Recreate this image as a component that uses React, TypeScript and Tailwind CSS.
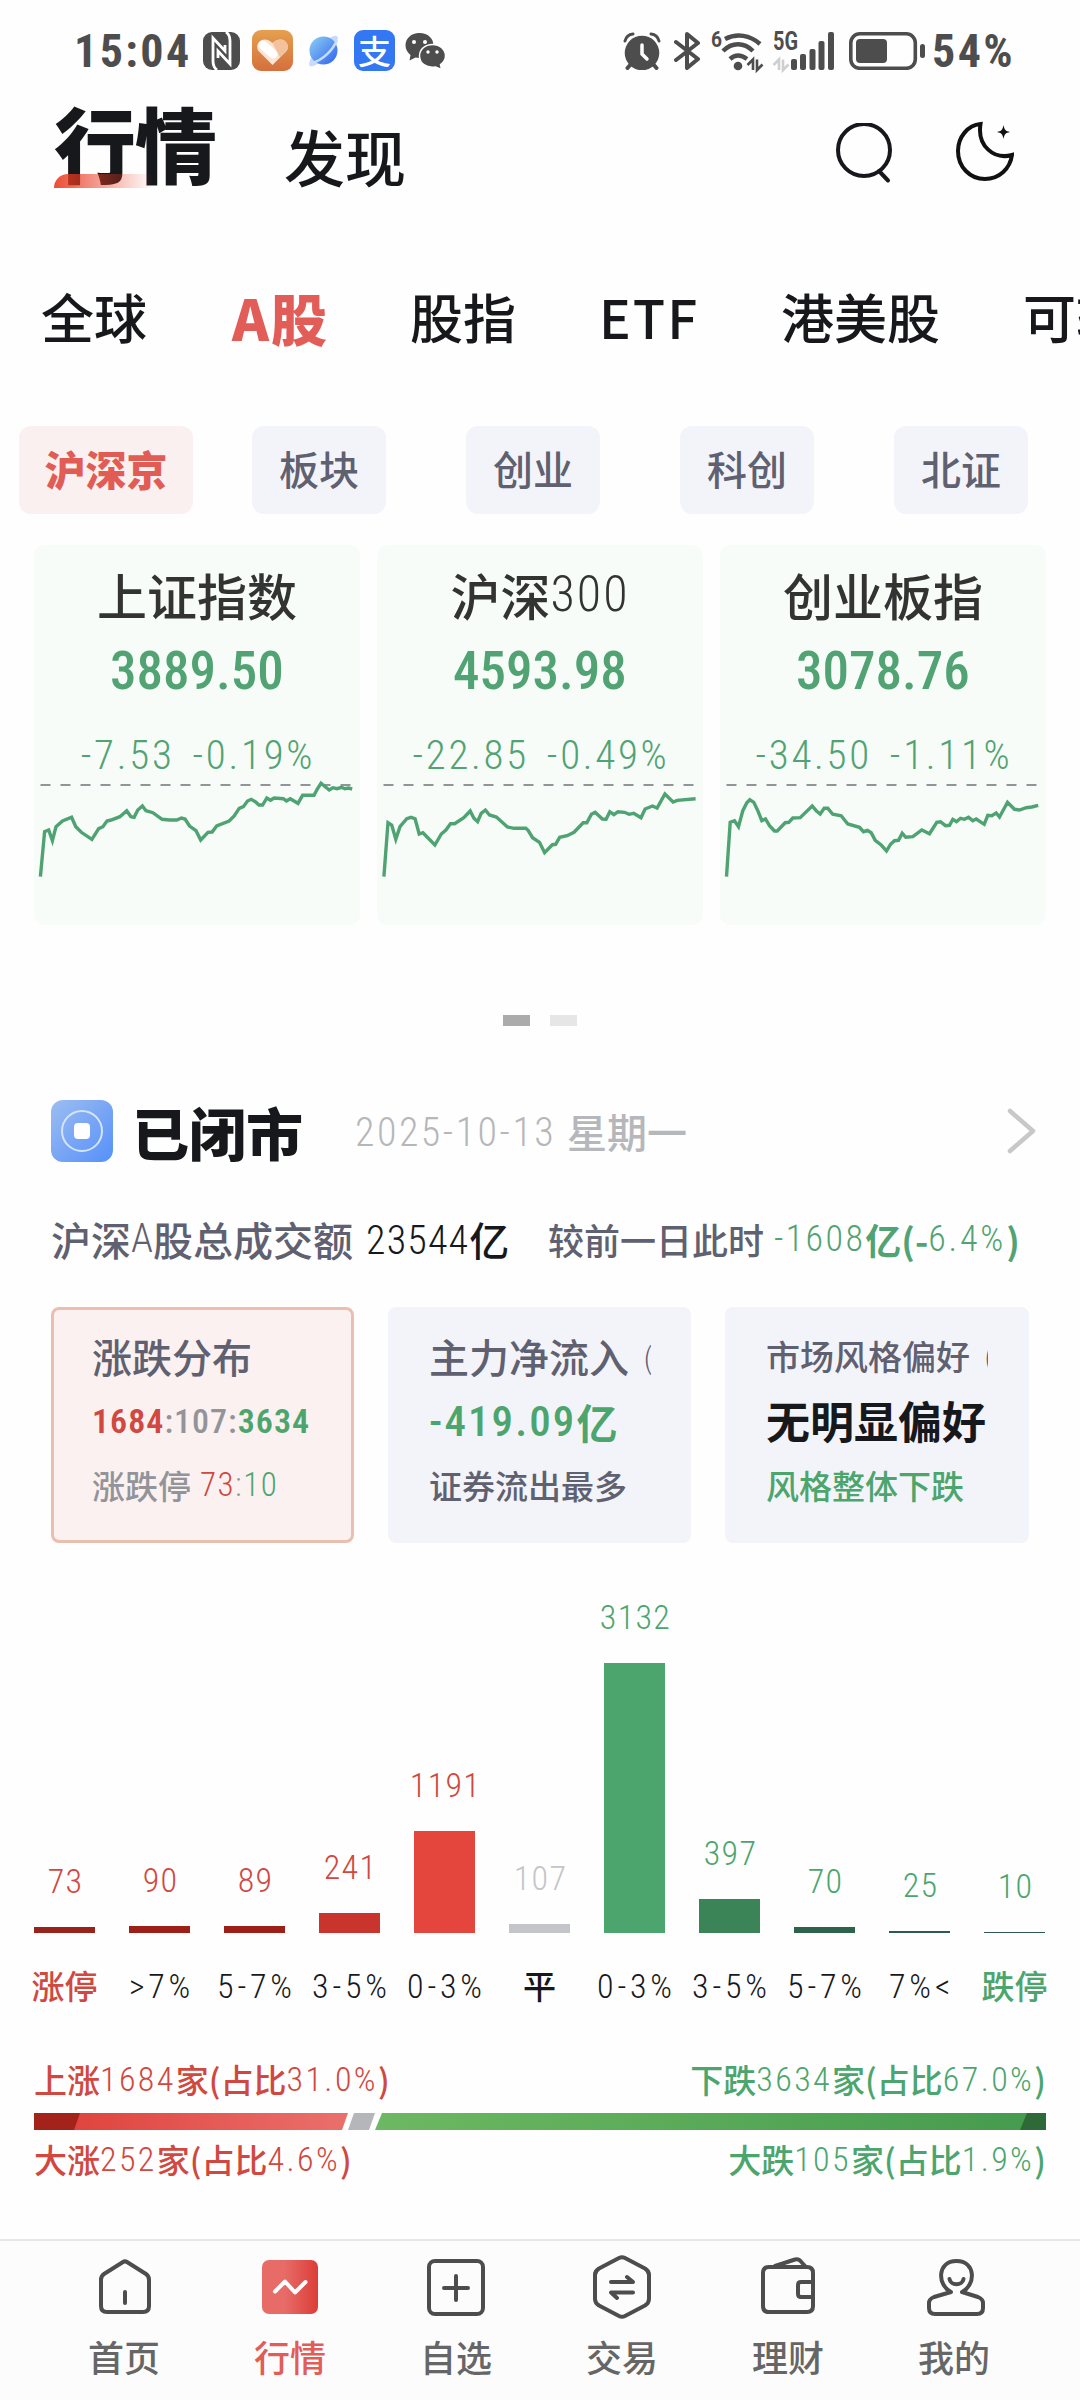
import { ReactNode } from "react";

const indexes = [
  {
    name: "上证指数",
    value: "3889.50",
    change: "-7.53",
    percent: "-0.19%",
    points:
      "6.4,96.7 10.6,51.7 14.7,50 18.4,60.7 22,46.7 28.5,41 37.6,37.3 41.8,46.7 47.3,52.3 57.9,59.3 64.7,48.7 68.9,46.7 73,41 77.1,40 85.9,36.7 92.7,30.7 96.9,36.7 100.1,37.3 103.8,30 108.4,26 112,30.7 118.9,32.7 128.1,39.3 135.4,40 142.8,40 147.4,38 151,39 155.6,46 162,50.7 166.7,60 174,52.3 178.1,52 182.7,46 195.1,41 200.2,36 205.2,28.3 209.4,26.7 213.5,21 217.2,19.3 221.3,21.7 225,25 228.6,25 232.8,18 236.5,20.3 240.1,18 249.3,18.7 252.5,21 256.2,18.7 264,23.3 268.6,15.3 280,15.3 283.3,9 287,3.3 295.2,10 298.9,7.7 303,8.7 307.6,7.3 310.8,8.7 314.5,8 318.2,9",
  },
  {
    name: "沪深",
    suffix: "300",
    value: "4593.98",
    change: "-22.85",
    percent: "-0.49%",
    points:
      "6.9,96.7 11,42.7 14.7,45 18.8,59.3 23,46.7 29.8,38.7 34,37.3 38.1,38.7 42.2,54 45.9,52.7 57.9,65 64.3,54 68.9,50 73.5,43.7 77.6,43.7 86.8,37.7 93.2,31 96.9,38.3 100.6,41.7 104.2,33.3 108.4,30 112.5,35 119.4,37 130.4,47 137.3,48.3 148.8,48.3 151.1,50.3 155.6,57.7 162.5,62.3 167.6,72.7 175.4,64.7 178.6,64.3 182.7,57.3 190.1,55.7 197,52.3 206.2,42.7 209.8,42.7 214.4,34.3 218.1,32.3 225.4,39 229.1,39.3 232.8,31.7 236.9,34.7 241,31.7 247.5,32.3 252.1,34.3 256.7,33.3 264,37.7 268.1,29 275.5,26 280.1,28 287.9,14 296.1,22 300.3,20.3 318.6,18.7",
  },
  {
    name: "创业板指",
    value: "3078.76",
    change: "-34.50",
    percent: "-1.11%",
    points:
      "6.5,96.7 10.2,42.3 14.5,40.7 18.5,46.7 22.8,30.7 26.8,22.7 29.8,19.7 33.8,22.3 37.8,30.7 41.8,40.7 45.5,39 49.5,45.7 54.5,51 57.2,51 65.2,42.7 68.8,42.3 72.8,38 80.2,37.7 92.2,26 96.2,30.7 100.2,34 104.2,28.3 107.8,28.3 112.8,34.3 121.2,35.7 127.8,44 139.5,47.3 143.5,51.7 147.5,50.3 151.2,52.7 155.2,60.3 161.2,65 166.5,71 170.5,64.3 174.5,60.7 178.5,60.3 182.2,53.3 185.8,57.3 192.8,56.7 201.8,50 209.5,53.7 216.8,42.3 220.5,41.7 225.5,45.7 229.5,45.3 232.8,39.3 236.5,41.7 240.5,38.3 244.5,39.3 248.5,37.3 252.8,40.7 256.2,39 264.2,44.3 267.8,35.3 271.8,35.7 276.2,33 279.5,37 287.5,22.3 294.5,29.3 299.5,30 306.2,27.7 311.8,27 318.2,25.3",
  },
];

const distribution = [
  { label: "涨停", cn: true, count: 73, height: 6, bar: "bg-[#97231b]", text: "text-[#d0483f]", axis: "text-[#d0483f]" },
  { label: ">7%", count: 90, height: 7, bar: "bg-[#9c2017]", text: "text-[#d0483f]", axis: "text-[#17181a]" },
  { label: "5-7%", count: 89, height: 7, bar: "bg-[#9c2017]", text: "text-[#d0483f]", axis: "text-[#17181a]" },
  { label: "3-5%", count: 241, height: 20, bar: "bg-[#c9352c]", text: "text-[#d0483f]", axis: "text-[#17181a]" },
  { label: "0-3%", count: 1191, height: 102, bar: "bg-[#e4463d]", text: "text-[#d0483f]", axis: "text-[#17181a]" },
  { label: "平", cn: true, count: 107, height: 9, bar: "bg-[#c4c5c9]", text: "text-[#c4c5c9]", axis: "text-[#17181a]" },
  { label: "0-3%", count: 3132, height: 270, bar: "bg-[#4da56e]", text: "text-[#4da56e]", axis: "text-[#17181a]" },
  { label: "3-5%", count: 397, height: 34, bar: "bg-[#3b8457]", text: "text-[#4da56e]", axis: "text-[#17181a]" },
  { label: "5-7%", count: 70, height: 6, bar: "bg-[#2d634a]", text: "text-[#4da56e]", axis: "text-[#17181a]" },
  { label: "7%<", count: 25, height: 2, bar: "bg-[#2d5c49]", text: "text-[#4da56e]", axis: "text-[#17181a]" },
  { label: "跌停", cn: true, count: 10, height: 1, bar: "bg-[#2d5c49]", text: "text-[#4da56e]", axis: "text-[#4da56e]" },
];

function Num({ children, className = "" }: { children: ReactNode; className?: string }) {
  return <span className={`font-[Roboto] font-stretch-[85%] ${className}`}>{children}</span>;
}

function StatusBar() {
  return (
    <div className="flex h-[102px] items-center text-[#4d4d4d]">
      <Num className="ml-[74px] w-[129px] text-[46px] leading-none font-bold tracking-[2.4px]">15:04</Num>
      <svg className="h-[38px] w-[37px]" viewBox="0 0 37 38">
        <rect width="37" height="38" rx="9" fill="#4d4d4d" />
        <path d="M14 38q-4-3-4-9V6l12 13v-6M23 0q4 3 4 9v23L15 19v7" fill="none" stroke="#fff" strokeWidth="2.8" />
      </svg>
      <svg className="ml-3 h-[41px] w-[41px]" viewBox="0 0 41 41">
        <defs>
          <linearGradient id="orange" x2="0" y2="1">
            <stop stopColor="#e5a04f" />
            <stop offset="1" stopColor="#d56f3d" />
          </linearGradient>
        </defs>
        <rect width="41" height="41" rx="9" fill="url(#orange)" />
        <path d="M20.5 35 7 21.5C1 14 11 4 20.5 13 30 4 40 14 34 21.5z" fill="#fbe4d3" />
        <path d="M20.5 13C30 4 40 14 34 21.5l-6 6" fill="#f3c19c" />
        <path d="m11 15 10 9" stroke="#fff" strokeWidth="9" strokeLinecap="round" />
      </svg>
      <svg className="ml-[14px] h-[34px] w-[33px]" viewBox="0 0 33 34">
        <defs>
          <linearGradient id="planet" x2="1" y2="1">
            <stop stopColor="#8fd0f5" />
            <stop offset="1" stopColor="#2d62ee" />
          </linearGradient>
        </defs>
        <ellipse cx="16.5" cy="17" rx="20" ry="6" fill="#c9d9fb" transform="rotate(-47 16.5 17)" />
        <circle cx="16.5" cy="16.5" r="14" fill="url(#planet)" />
        <path d="M5 29C16 26 26 16 30 6" stroke="#c9dcfc" strokeWidth="2.5" fill="none" />
      </svg>
      <div className="ml-[14px] flex h-[41px] w-[41px] items-center justify-center rounded-[9px] bg-[#3377f3] text-[33px] leading-none font-medium text-white">
        支
      </div>
      <svg className="ml-[10px] h-[36px] w-[41px]" viewBox="0 0 41 36" fill="#4d4d4d">
        <path d="M14.5 0C6 0 .5 5.5.5 12.5c0 4 2 7 5 9.500l-1 5.500 6-3c9 2 18-3 18-12C28.500 5.500 23 0 14.500 0z" />
        <path
          d="M27.5 11.5C20 11.5 14.500 16.500 14.500 23c0 7 6.500 12.500 16 11l6 2.500-1-5c3-2 5-5 5-8.500 0-6.500-5.500-11.500-13-11.500z"
          stroke="#fff"
          strokeWidth="1.5"
        />
        <g fill="#fff">
          <circle cx="9" cy="9" r="2" />
          <circle cx="20" cy="9" r="2" />
          <circle cx="23" cy="19" r="1.7" />
          <circle cx="32" cy="19" r="1.7" />
        </g>
      </svg>
      <svg className="ml-auto h-[38px] w-[38px]" viewBox="0 0 38 38" fill="none" stroke="#4d4d4d" strokeLinecap="round">
        <circle cx="19" cy="21" r="17.3" fill="#4d4d4d" stroke="none" />
        <path d="M2 9c1-4 4-6.500 8-7M36 9c-1-4-4-6.500-8-7" strokeWidth="3" />
        <path d="m8 32-3.500 4M30 32l3.500 4" strokeWidth="4" />
        <path d="M19 13v9l5 5" stroke="#fff" strokeWidth="3.5" />
      </svg>
      <svg className="ml-[13px] h-[38px] w-[27px]" viewBox="0 0 27 38" fill="none" stroke="#4d4d4d" strokeWidth="4" strokeLinejoin="round" strokeLinecap="round">
        <path d="m2 10 22 17-11 9V2l11 9L2 28" />
      </svg>
      <svg className="ml-[10px] h-[40px] w-[52px] overflow-visible" viewBox="0 0 52 40" fill="none" stroke="#4d4d4d" strokeWidth="4.5">
        <path d="M14 8c12-6 25-4 35 5M12 20c9-9 21-9 30 0M19 28c5-4.500 11-4.500 17 0" />
        <circle cx="27" cy="35" r="4.3" fill="#4d4d4d" stroke="none" />
        <path d="M36.500 34 42 28.500V39M51.500 33.500 46 39V28.500" strokeWidth="2.600" />
        <text x="0" y="16" fontFamily="Roboto" fontSize="22" fontWeight="700" fill="#4d4d4d" stroke="none" textLength="11" lengthAdjust="spacingAndGlyphs">
          6
        </text>
      </svg>
      <svg className="ml-[10px] h-[40px] w-[62px] overflow-visible" viewBox="0 0 62 40" fill="#4d4d4d">
        <text x="0" y="19" fontFamily="Roboto" fontSize="25" fontWeight="700" textLength="25" lengthAdjust="spacingAndGlyphs">
          5G
        </text>
        <path d="M.5 34 6 28.500V39M15.500 33.500 10 39V28.500" fill="none" stroke="#cfcfcf" strokeWidth="2.600" />
        <rect x="18" y="28" width="6" height="11" rx="2" />
        <rect x="27" y="23" width="6" height="16" rx="2" />
        <rect x="36.5" y="18" width="6" height="21" rx="2" />
        <rect x="45.5" y="10" width="6" height="29" rx="2" />
        <rect x="55" y="1" width="6" height="38" rx="2" />
      </svg>
      <svg className="ml-[14px] h-[38px] w-[77px]" viewBox="0 0 77 38">
        <rect x="1.8" y="1.8" width="64.5" height="34.5" rx="9" fill="none" stroke="#4d4d4d" strokeWidth="3.6" />
        <rect x="7" y="7" width="31" height="24" rx="4" fill="#4d4d4d" />
        <rect x="71" y="12" width="5" height="14" rx="2.5" fill="#4d4d4d" />
      </svg>
      <Num className="mr-[64px] ml-[6px] w-[84px] text-[46px] leading-none font-bold tracking-[2.4px]">54%</Num>
    </div>
  );
}

function Header() {
  return (
    <div className="flex h-[138px] pt-1 text-[#17181b]">
      <div className="relative ml-[54px] h-[84px] text-[82px] leading-[71px] font-black tracking-[-1px]">
        行情
        <div className="absolute top-[68px] left-0 h-[14px] w-[99px] rounded-tl-[14px] bg-linear-to-r from-[#e9391f]/90 via-[#e9391f]/45 to-[#e9391f]/0" />
      </div>
      <div className="mt-[20px] ml-[68px] text-[61px] leading-[60px] font-medium">发现</div>
      <svg className="mt-[17px] ml-auto h-[64px] w-[60px]" viewBox="0 0 60 64" fill="none" stroke="#17181b" strokeWidth="4">
        <circle cx="29" cy="27" r="26" />
        <path d="m44 48 9 9.500" strokeLinecap="round" />
      </svg>
      <svg className="mt-[15px] mr-[66px] ml-[59px] h-[64px] w-[60px]" viewBox="0 0 60 64" fill="none" stroke="#111" strokeWidth="4">
        <path d="M26.500 3C14 4 4 16 4 30c0 16 12 28 27 28 14 0 25-10 27-24-18 5-35-9-31.500-31z" strokeLinejoin="miter" />
        <path d="M49.500 4c1 5 2 6 6.500 7-4.500 1-5.500 2-6.500 7-1-5-2-6-6.500-7 4.500-1 5.500-2 6.500-7z" fill="#111" stroke="none" />
      </svg>
    </div>
  );
}

function Markets() {
  return (
    <>
      <div className="flex h-[158px] gap-[83px] overflow-hidden pt-[50px] pl-[41px] text-[53px] leading-[53px] font-medium whitespace-nowrap text-[#17181b] *:shrink-0">
        <span>全球</span>
        <span className="w-[97px] pl-[2px] text-[56px] font-black tracking-[2px] text-[#e25d57]">A股</span>
        <span>股指</span>
        <span className="w-[99px] tracking-[2px]">ETF</span>
        <span>港美股</span>
        <span>可转债</span>
      </div>
      <div className="mt-[28px] flex h-[88px] pl-[19px] text-[40px] leading-none font-medium text-[#5f6070]">
        <div className="flex w-[174px] items-center justify-center rounded-[12px] bg-[#faf0ef] pb-[3px] text-[41px] font-black text-[#e05c55]">沪深京</div>
        <div className="ml-[59px] flex gap-[80px]">
          {["板块", "创业", "科创", "北证"].map((name) => (
            <div key={name} className="flex w-[134px] items-center justify-center rounded-[12px] bg-[#f3f4f9] pb-[3px]">
              {name}
            </div>
          ))}
        </div>
      </div>
    </>
  );
}

function IndexCards() {
  return (
    <div className="mt-[31px] flex gap-[17px] pl-[34px]">
      {indexes.map((item) => (
        <div key={item.name} className="flex h-[380px] w-[326px] flex-col items-center rounded-[10px] bg-[#f7fcf9] text-[#52a373]">
          <div className="mt-[24px] flex h-[50px] items-center text-[50px] leading-none font-medium text-[#333]">
            {item.name}
            {item.suffix && <Num className="text-[50px] font-light tracking-[2px]">{item.suffix}</Num>}
          </div>
          <Num className="mt-[25px] text-[53px] leading-[54px] font-medium">{item.value}</Num>
          <Num className="mt-[33px] flex gap-[18px] pl-[2px] text-[41px] leading-[48px] font-light tracking-[2.7px]">
            <span>{item.change}</span>
            <span>{item.percent}</span>
          </Num>
          <svg className="mt-px h-[110px] w-[326px]" viewBox="0 0 326 110" fill="none">
            <path d="M6.500 5h312" stroke="#929499" strokeWidth="2" strokeDasharray="10 10" />
            <polyline points={item.points} stroke="#4fa372" strokeWidth="3.4" />
          </svg>
        </div>
      ))}
    </div>
  );
}

function Summary() {
  return (
    <>
      <div className="mt-[90px] flex justify-center gap-[20px]">
        <div className="h-[11px] w-[27px] bg-[#ababab]" />
        <div className="h-[11px] w-[27px] bg-[#e6e6e6]" />
      </div>
      <div className="mt-[72px] flex h-[66px] items-center pl-[51px]">
        <svg className="h-[62px] w-[62px]" viewBox="0 0 62 62">
          <defs>
            <linearGradient id="blue" x2="1" y2="1">
              <stop stopColor="#9dbdf0" />
              <stop offset="1" stopColor="#5590fa" />
            </linearGradient>
          </defs>
          <rect width="62" height="62" rx="12" fill="url(#blue)" />
          <circle cx="31" cy="31" r="20" fill="none" stroke="#d5e4fd" strokeWidth="2" />
          <rect x="23" y="23" width="16" height="16" rx="4" fill="#fff" />
        </svg>
        <h2 className="ml-[19px] w-[223px] text-[57px] leading-[66px] font-black text-[#17181b]">已闭市</h2>
        <div className="flex items-center text-[40px] leading-[40px] text-[#b6b7ba]">
          <Num className="w-[212px] pt-[5px] font-light tracking-[2.5px]">2025-10-13</Num>
          <span className="font-medium">星期一</span>
        </div>
        <svg className="mr-[43px] ml-auto h-[48px] w-[32px]" viewBox="0 0 32 48" fill="none" stroke="#c8c8c8" strokeWidth="4.5" strokeLinecap="round" strokeLinejoin="round">
          <path d="m5 4 23 20L5 44" />
        </svg>
      </div>
      <div className="mt-[55px] flex h-[88px] pl-[51px] leading-[40px] font-medium whitespace-nowrap text-[#5f6070]">
        <div className="flex w-[315px] text-[40px]">
          沪深<Num className="font-light">A</Num>股总成交额
        </div>
        <div className="flex w-[182px] text-[40px] text-[#17181b]">
          <Num className="pt-[2px] font-light tracking-[1.2px]">23544</Num>亿
        </div>
        <div className="w-[226px] text-[36px]">较前一日此时</div>
        <div className="flex text-[36px] font-bold text-[#52a373]">
          <Num className="font-light tracking-[2.4px]">-1608</Num>亿(-
          <Num className="font-light tracking-[2.8px]">6.4%</Num>)
        </div>
      </div>
    </>
  );
}

function SummaryCards() {
  return (
    <div className="flex gap-[34px] pl-[51px] leading-[50px] font-medium whitespace-nowrap text-[#5f6070]">
      <div className="h-[236px] w-[303px] rounded-[8px] border-3 border-[#ebbfb0] bg-[#fbf1f0] pt-[21px] pl-[38px]">
        <div className="text-[40px]">涨跌分布</div>
        <Num className="mt-[15px] block text-[34px] tracking-[1px] text-[#929499]">
          <b className="font-semibold text-[#d0483f]">1684</b>:107:<b className="font-semibold text-[#4da56e]">3634</b>
        </Num>
        <div className="mt-[14px] flex text-[33px] text-[#929499]">
          涨跌停
          <Num className="ml-[9px] text-[33px] font-light tracking-[1.5px]">
            <span className="text-[#d0483f]">73</span>:<span className="text-[#4da56e]">10</span>
          </Num>
        </div>
      </div>
      <div className="h-[236px] w-[303px] rounded-[8px] bg-[#f3f4f9] pt-[24px] pl-[41px]">
        <div className="w-[222px] overflow-hidden text-[40px]">
          主力净流入<span className="ml-[14px] inline-block align-top text-[30px] font-light">(</span>
        </div>
        <div className="mt-[15px] flex text-[41px] font-bold text-[#4da56e]">
          <Num className="text-[43px] font-medium tracking-[2.1px]">-419.09</Num>亿
        </div>
        <div className="mt-[14px] text-[33px]">证券流出最多</div>
      </div>
      <div className="h-[236px] w-[304px] rounded-[8px] bg-[#f3f4f9] pt-[24px] pl-[41px]">
        <div className="h-[50px] w-[222px] overflow-hidden text-[34px]">
          市场风格偏好<span className="ml-[14px] inline-block align-top text-[28px] font-light">(</span>
        </div>
        <div className="mt-[14px] text-[44px] font-bold text-[#17181b]">无明显偏好</div>
        <div className="mt-[15px] text-[33px] text-[#4da56e]">风格整体下跌</div>
      </div>
    </div>
  );
}

function DistributionChart() {
  return (
    <div className="flex h-[477px] pl-[17px]">
      {distribution.map((item, i) => (
        <div key={i} className="flex w-[95px] flex-col items-center">
          <div className="flex h-[390px] flex-col items-center justify-end">
            <Num className={`mb-[26px] pl-[2px] text-[34px] leading-[40px] font-light tracking-[1.3px] ${item.text}`}>{item.count}</Num>
            <div className={`w-[61px] ${item.bar}`} style={{ height: item.height }} />
          </div>
          <div className={`mt-[33px] flex h-[40px] items-center text-[33px] leading-none whitespace-nowrap ${item.axis}`}>
            {item.cn ? (
              <span className="font-medium">{item.label}</span>
            ) : (
              <Num className="pl-[4px] text-[34px] font-light tracking-[3.8px]">{item.label}</Num>
            )}
          </div>
        </div>
      ))}
    </div>
  );
}

function Ratio({ name, count, percent }: { name: string; count: number; percent: string }) {
  return (
    <div className="flex">
      {name}
      <Num className="text-[34px] font-light tracking-[2.4px]">{count}</Num>家(占比
      <Num className="text-[34px] font-light tracking-[2.4px]">{percent}</Num>)
    </div>
  );
}

function RatioBar() {
  return (
    <div className="mt-[40px] h-[180px] px-[34px] text-[33px] leading-[40px] font-medium">
      <div className="flex justify-between">
        <div className="text-[#d0483f]"><Ratio name="上涨" count={1684} percent="31.0%" /></div>
        <div className="text-[#4da56e]"><Ratio name="下跌" count={3634} percent="67.0%" /></div>
      </div>
      <svg className="mt-[14px] h-[17px] w-[1012px]" viewBox="0 0 1012 17">
        <defs>
          <linearGradient id="up">
            <stop stopColor="#e0443e" />
            <stop offset="1" stopColor="#ea706c" />
          </linearGradient>
          <linearGradient id="down">
            <stop stopColor="#6db862" />
            <stop offset="1" stopColor="#459b4e" />
          </linearGradient>
        </defs>
        <path d="M40 0h274l-6 17H40z" fill="url(#up)" />
        <path d="M0 0h46l-6 17H0z" fill="#a32219" />
        <path d="M320 0h21l-6 17h-21z" fill="#b5b6ba" />
        <path d="M348 0h650v17H341z" fill="url(#down)" />
        <path d="M993 0h19v17h-26z" fill="#2e6a38" />
      </svg>
      <div className="mt-[9px] flex justify-between">
        <div className="text-[#d0483f]"><Ratio name="大涨" count={252} percent="4.6%" /></div>
        <div className="text-[#4da56e]"><Ratio name="大跌" count={105} percent="1.9%" /></div>
      </div>
    </div>
  );
}

const tabs = [
  { name: "首页", icon: <path d="M32 8 13 20q-3 2-3 6v26q0 6 6 6h36q6 0 6-6V26q0-4-3-6L36 8q-2-1.300-4 0zM34 38v11" /> },
  {
    name: "行情",
    active: true,
    icon: (
      <>
        <defs>
          <linearGradient id="tab">
            <stop offset=".4" stopColor="#e76c68" />
            <stop offset="1" stopColor="#dc3d38" />
          </linearGradient>
        </defs>
        <rect x="5" y="6" width="56" height="54" rx="7" fill="url(#tab)" stroke="none" />
        <path d="m18 37.500 10-10 10 11 10.500-10.500" stroke="#fff" />
      </>
    ),
  },
  {
    name: "自选",
    icon: (
      <>
        <rect x="6" y="7" width="54" height="53" rx="6" />
        <path d="M33 22v24M21 34h24" />
      </>
    ),
  },
  {
    name: "交易",
    icon: <path d="M30 4 10 14.500Q6 17 6 21v24q0 4 4 6.500L30 62q3 1.500 6 0l20-10.500q4-2.500 4-6.500V21q0-4-4-6.500L36 4q-3-1.500-6 0zM22 28h22l-6-5M44 38.500H22l6 5.500" />,
  },
  {
    name: "理财",
    icon: <path d="M14 13h38q6 0 6 6v33q0 6-6 6H14q-6 0-6-6V19q0-6 6-6zM20 12 40 5.500q3-1 5 1l5 5.500M58 28H46q-3 0-3 3v9q0 3 3 3h12" />,
  },
  {
    name: "我的",
    icon: <path d="M30 38C16 31 16 7 35.500 7s19.500 24 5.500 31l16 5q5 2 5 6v5q0 6-6 6H14q-6 0-6-6v-5q0-4 5-6zM28.500 25c1 7 13 7 14 0" />,
  },
];

function TabBar() {
  return (
    <nav className="mt-auto flex h-[161px] border-t-2 border-[#e6e6ea] bg-[#fcfcfc] px-[41px]">
      {tabs.map((tab) => (
        <div key={tab.name} className="flex w-[166px] flex-col items-center pt-[13px]">
          <svg className="h-[66px] w-[66px]" viewBox="0 0 66 66" fill="none" stroke="#4d4d4d" strokeWidth="4" strokeLinecap="round" strokeLinejoin="round">
            {tab.icon}
          </svg>
          <span className={`mt-[16px] text-[36px] leading-[40px] font-medium ${tab.active ? "text-[#e25d57]" : "text-[#666]"}`}>{tab.name}</span>
        </div>
      ))}
    </nav>
  );
}

export default function App() {
  return (
    <div className="flex h-[2400px] w-[1080px] flex-col overflow-hidden bg-[#fefefe] font-['Noto_Sans_CJK_SC',sans-serif]">
      <StatusBar />
      <Header />
      <Markets />
      <IndexCards />
      <Summary />
      <SummaryCards />
      <DistributionChart />
      <RatioBar />
      <TabBar />
    </div>
  );
}
